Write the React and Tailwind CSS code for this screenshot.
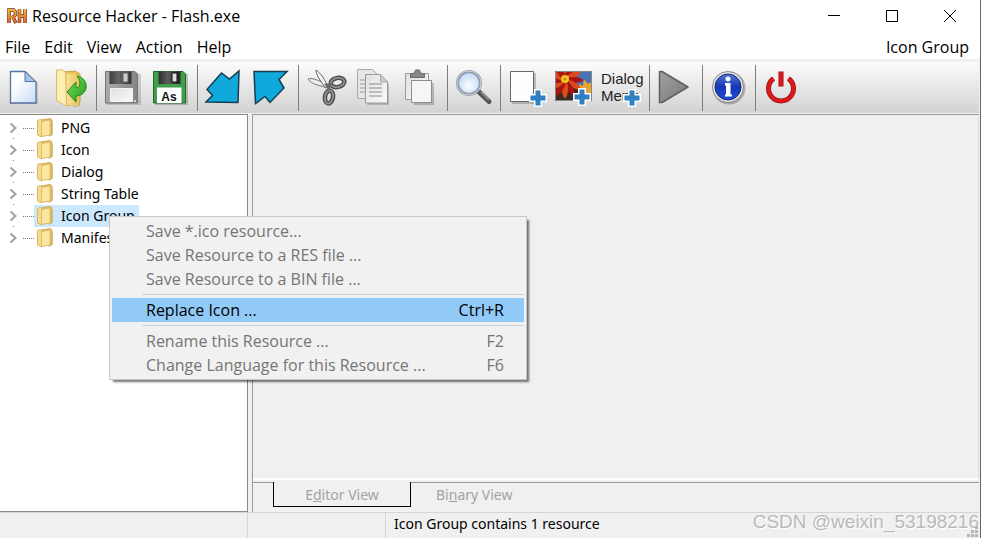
import React, { useState } from "react";

const menus = ["File", "Edit", "View", "Action", "Help"];

const treeItems = ["PNG", "Icon", "Dialog", "String Table", "Icon Group", "Manifest"];

const contextItems = [
  { label: "Save *.ico resource...", disabled: true },
  { label: "Save Resource to a RES file ...", disabled: true },
  { label: "Save Resource to a BIN file ...", disabled: true },
  null,
  { label: "Replace Icon ...", shortcut: "Ctrl+R" },
  null,
  { label: "Rename this Resource ...", shortcut: "F2", disabled: true },
  { label: "Change Language for this Resource ...", shortcut: "F6", disabled: true },
];

function Gradients() {
  return (
    <svg width="0" height="0" className="absolute" aria-hidden="true">
      <defs>
        <linearGradient id="paper" x1="0" y1="0" x2="1" y2="1">
          <stop offset="0.3" stopColor="#ffffff" />
          <stop offset="1" stopColor="#c6daf3" />
        </linearGradient>
        <linearGradient id="grayPaper" x1="0" y1="0" x2="1" y2="1">
          <stop offset="0" stopColor="#e0e0e0" />
          <stop offset="1" stopColor="#fafafa" />
        </linearGradient>
        <linearGradient id="folder" x1="0" y1="0" x2="1" y2="0">
          <stop offset="0" stopColor="#fbe9a6" />
          <stop offset="1" stopColor="#ecc65c" />
        </linearGradient>
        <linearGradient id="grayDisk" x1="0" y1="0" x2="1" y2="0">
          <stop offset="0" stopColor="#a9a9a9" />
          <stop offset="1" stopColor="#858585" />
        </linearGradient>
        <linearGradient id="dark" x1="0" y1="0" x2="1" y2="0">
          <stop offset="0" stopColor="#2c2c2c" />
          <stop offset="0.4" stopColor="#5c5c5c" />
          <stop offset="1" stopColor="#222222" />
        </linearGradient>
        <linearGradient id="greenArrow" x1="0" y1="0" x2="1" y2="1">
          <stop offset="0" stopColor="#7fe05c" />
          <stop offset="1" stopColor="#1f9a1c" />
        </linearGradient>
        <linearGradient id="play" x1="0" y1="0" x2="1" y2="1">
          <stop offset="0" stopColor="#a2a2a2" />
          <stop offset="1" stopColor="#777777" />
        </linearGradient>
        <radialGradient id="lens" cx="0.5" cy="0.6" r="0.6">
          <stop offset="0" stopColor="#ffffff" />
          <stop offset="1" stopColor="#b9d5f7" />
        </radialGradient>
        <linearGradient id="infoBlue" x1="0" y1="0" x2="0" y2="1">
          <stop offset="0" stopColor="#5577dd" />
          <stop offset="0.5" stopColor="#1437b4" />
          <stop offset="1" stopColor="#2450d4" />
        </linearGradient>
        <linearGradient id="rh" x1="0" y1="0" x2="0" y2="1">
          <stop offset="0" stopColor="#f7b640" />
          <stop offset="1" stopColor="#d9622a" />
        </linearGradient>
        <clipPath id="photo">
          <path d="M2 7h37v30H2z" />
        </clipPath>
      </defs>
    </svg>
  );
}

function Plus({ x, y }) {
  return (
    <path
      transform={`translate(${x} ${y})`}
      d="M-2.500-7.500h5v5h5v5h-5v5h-5v-5h-5v-5h5z"
      fill="#2f7fc3"
      stroke="#fff"
      strokeWidth="3"
      paintOrder="stroke"
    />
  );
}

function NewIcon() {
  return (
    <>
      <path d="M11 9h16l11 10v21H11z" fill="#000" opacity="0.12" />
      <path d="M10.500 7.500H25L36 18v21H10.500z" fill="url(#paper)" stroke="#5673a3" strokeWidth="1.300" />
      <path d="M25 7.500V17.500H35.500z" fill="#a9c6ea" stroke="#5673a3" />
    </>
  );
}

function OpenIcon() {
  return (
    <>
      <path d="M9 37l18 6 5-1V12l-5-5-7 1z" fill="#000" opacity="0.2" />
      <path d="M14 8l13-1 5 3v28l-12 4z" fill="#e9c25a" stroke="#c9a04a" />
      <path d="M8.500 6h6l3 2 1 34-10-5.500z" fill="#fdeeb4" stroke="#dcbb6c" />
      <path d="M18.500 9L31 12v31l-12-2z" fill="url(#folder)" opacity="0.8" />
      <path
        d="M29 12c6 1 10 6 9 12-1 5-5 8-10 8v6l-9-10 9-10v6c4 0 6-6 1-12z"
        fill="url(#greenArrow)"
        stroke="#1c8a1a"
      />
    </>
  );
}

function SaveIcon() {
  return (
    <>
      <path d="M6 10h34v31H6z" fill="#000" opacity="0.15" />
      <path d="M4.500 7.500H34l2.500 2.500v29h-32z" fill="url(#grayDisk)" stroke="#747474" />
      <path d="M8.500 7.500h22v12.500h-22z" fill="url(#dark)" opacity="0.85" />
      <path d="M22 9h5v9h-5z" fill="#ccc" stroke="#666" />
      <path d="M9.500 24.500h22v13h-22z" fill="url(#grayPaper)" stroke="#f4f4f4" />
      <circle cx="34" cy="37" r="1" fill="#eee" />
    </>
  );
}

function SaveAsIcon() {
  return (
    <>
      <path d="M6 10h33v31H6z" fill="#000" opacity="0.2" />
      <path d="M4.500 7.500H34L36.500 10v29h-32z" fill="#3fa04b" stroke="#23662c" />
      <path d="M9.500 7.500h22v12.500h-22z" fill="url(#dark)" />
      <path d="M23 9h5v9h-5z" fill="#ddd" stroke="#111" />
      <path d="M8 23.500h24.500v15.500H8z" fill="#fff" />
      <text x="20" y="37" textAnchor="middle" fill="#111" className="font-['Liberation_Sans'] text-[12px] font-bold">
        As
      </text>
    </>
  );
}

function ImportIcon() {
  return (
    <path
      d="M4 38l6.500-6.500L5 25.500 19.500 9l8 6L37 7l-1 31.500z"
      fill="#10a9dc"
      stroke="#173d52"
      strokeWidth="1.500"
    />
  );
}

function ExportIcon() {
  return (
    <path
      d="M4 7.500H37l-8 8 5 8.500-14 14.500-5-6-9.500 7z"
      fill="#10a9dc"
      stroke="#173d52"
      strokeWidth="1.500"
    />
  );
}

function CutIcon() {
  return (
    <>
      <path d="M5 15c4-2 14 3 20 6l-2 2C17 22 8 20 5 15z" fill="#eee" stroke="#777" />
      <path d="M13 6c5 3 9 10 12 17l-3 1C19 18 13 12 13 6z" fill="#f4f4f4" stroke="#666" />
      <ellipse cx="34.500" cy="18.500" rx="7" ry="4.500" transform="rotate(-12 34.500 18.500)" fill="none" stroke="#484848" strokeWidth="4.500" />
      <ellipse cx="34.500" cy="18.500" rx="7" ry="4.500" transform="rotate(-12 34.500 18.500)" fill="none" stroke="#8e8e8e" strokeWidth="2" />
      <ellipse cx="26" cy="33" rx="4" ry="6.500" transform="rotate(10 26 33)" fill="none" stroke="#484848" strokeWidth="4.500" />
      <ellipse cx="26" cy="33" rx="4" ry="6.500" transform="rotate(10 26 33)" fill="none" stroke="#8e8e8e" strokeWidth="2" />
      <path d="M21 20l8-1-3 8z" fill="#6a6a6a" />
    </>
  );
}

function CopyIcon() {
  return (
    <>
      <path d="M6.500 5.500h15l6 6v23h-21z" fill="#e6e6e6" stroke="#a8a8a8" />
      <path d="M9 16h6M9 20h6M9 24h6M9 28h6" stroke="#999" />
      <path d="M16 13h16l6 7v21H16z" fill="#000" opacity="0.18" />
      <path d="M14.500 10.500h15l7 7.500v21h-22z" fill="url(#grayPaper)" stroke="#999" />
      <path d="M29.500 10.500V18h7z" fill="#ccc" stroke="#aaa" />
      <path d="M18 20h13M18 24h13M18 28h13M18 32h13" stroke="#8a8a8a" />
    </>
  );
}

function PasteIcon() {
  return (
    <>
      <path d="M6.500 9.500h23v26h-23z" fill="url(#grayPaper)" stroke="#9a9a9a" />
      <path d="M11.500 13.500V10l4-1 1-3h4l1 3 4 1v3.500z" fill="#888" stroke="#666" />
      <path d="M15 19h20v22H15z" fill="#000" opacity="0.2" />
      <path d="M12.500 16.500h20v22h-20z" fill="#f6f6f6" stroke="#8c8c8c" />
    </>
  );
}

function FindIcon() {
  return (
    <>
      <path d="M26 27l11 10.500" stroke="#555" strokeWidth="5" strokeLinecap="round" />
      <path d="M29 28l8 8" stroke="#999" strokeWidth="1.500" />
      <circle cx="17" cy="19" r="11.500" fill="url(#lens)" stroke="#8d98a8" strokeWidth="3" />
      <circle cx="17" cy="19" r="12" fill="none" stroke="#cfd6df" />
    </>
  );
}

function BlankIcon() {
  return (
    <>
      <path d="M7 9h24v31H7z" fill="#000" opacity="0.2" />
      <path d="M5.500 7.500h23v30h-23z" fill="#fdfdfd" stroke="#666" />
      <Plus x={33} y={34} />
    </>
  );
}

function ImageIcon() {
  const petals = [0, 30, 60, 90, 120, 150, 180, 210, 240, 270, 300, 330];
  return (
    <>
      <g clipPath="url(#photo)">
        <path d="M2 7h37v30H2z" fill="#3f2a22" />
        <path d="M20 7h19v15H20z" fill="#4a73b5" />
        <path d="M26 20l4 2 1-7 4 5 5-3v14H26z" fill="#e9a62c" />
        {petals.map((angle) => (
          <ellipse
            key={angle}
            cx="12"
            cy="7"
            rx="3"
            ry="9"
            transform={`rotate(${angle} 12 16)`}
            fill={angle % 60 === 0 ? "#de4a1c" : "#a81510"}
          />
        ))}
        <circle cx="12" cy="15" r="4" fill="#f3c423" />
        <circle cx="12" cy="15" r="1.500" fill="#c98a12" />
      </g>
      <path d="M2.500 7.500h36v29h-36z" fill="none" stroke="#888" />
      <Plus x={29} y={33} />
    </>
  );
}

function DialogIcon() {
  return (
    <>
      <text x="0" y="20" fill="#222" className="font-['Liberation_Sans'] text-[15px]">
        Dialog
      </text>
      <text x="0" y="37" fill="#222" className="font-['Liberation_Sans'] text-[15px]">
        Menu
      </text>
      <Plus x={31} y={34} />
    </>
  );
}

function RunIcon() {
  return (
    <path
      d="M5.500 7.500H8L34 23 8 38.500H5.500z"
      fill="url(#play)"
      stroke="#5f5f5f"
      strokeWidth="1.500"
      strokeLinejoin="round"
    />
  );
}

function InfoIcon() {
  return (
    <>
      <circle cx="22" cy="24" r="16.500" fill="#000" opacity="0.25" />
      <circle cx="21" cy="23" r="15.500" fill="#e6e6e6" stroke="#8b8b8b" />
      <circle cx="21" cy="23" r="13" fill="url(#infoBlue)" stroke="#14277a" />
      <circle cx="21" cy="15" r="2.500" fill="#fff" />
      <path d="M18 19h5.500v11.500H25v2h-7v-2h1v-9h-1z" fill="#fff" />
    </>
  );
}

function PowerIcon() {
  return (
    <>
      <path d="M13.500 14.500a12.500 12.500 0 1 0 15 0" fill="none" stroke="#8f1515" strokeWidth="5" />
      <path d="M13.500 14.500a12.500 12.500 0 1 0 15 0" fill="none" stroke="#e01818" strokeWidth="3.500" />
      <path d="M21 7.500v15" stroke="#8f1515" strokeWidth="5" />
      <path d="M21 8v14" stroke="#e01818" strokeWidth="3.500" />
    </>
  );
}

const toolGroups = [
  [["New", NewIcon], ["Open", OpenIcon]],
  [["Save", SaveIcon], ["Save as", SaveAsIcon]],
  [["Import", ImportIcon], ["Export", ExportIcon]],
  [["Cut", CutIcon], ["Copy", CopyIcon], ["Paste", PasteIcon]],
  [["Find", FindIcon]],
  [["Add blank script", BlankIcon], ["Add image", ImageIcon], ["Add dialog or menu", DialogIcon]],
  [["Compile script", RunIcon]],
  [["About", InfoIcon]],
  [["Exit", PowerIcon]],
];

function TitleBar() {
  return (
    <header className="flex h-8 items-center bg-white">
      <svg width="22" height="20" viewBox="0 0 22 20" className="ml-1.5 shrink-0">
        <path
          d="M3 17V4h4.500l2 2v3L7 11l3 6M13.500 3v14M19 3v14M13 10h6"
          fill="none"
          stroke="#6b2d12"
          strokeWidth="3.500"
        />
        <path
          d="M3 17V4h4.500l2 2v3L7 11H4M7 11l3 6M13.500 3v14M19 3v14M13 10h6"
          fill="none"
          stroke="url(#rh)"
          strokeWidth="2.200"
        />
      </svg>
      <h1 className="ml-1 flex-1 text-base">Resource Hacker - Flash.exe</h1>
      <div className="mr-px flex">
        <button aria-label="Minimize" className="flex h-8 w-[58px] items-center justify-center">
          <svg width="12" height="12" viewBox="0 0 12 12"><path d="M0 5.500h12" stroke="#000" /></svg>
        </button>
        <button aria-label="Maximize" className="flex h-8 w-[58px] items-center justify-center">
          <svg width="12" height="12" viewBox="0 0 12 12"><path d="M.5.5h11v11H.5z" fill="none" stroke="#000" /></svg>
        </button>
        <button aria-label="Close" className="flex h-8 w-[58px] items-center justify-center">
          <svg width="12" height="12" viewBox="0 0 12 12"><path d="M0 0l12 12M12 0L0 12" stroke="#000" /></svg>
        </button>
      </div>
    </header>
  );
}

function Toolbar() {
  return (
    <div role="toolbar" className="flex h-[51px] items-center bg-linear-to-b from-[#fcfcfc] to-[#d2d2d2]">
      {toolGroups.map((group, i) => (
        <React.Fragment key={i}>
          {i > 0 && <div className="mr-1 h-[46px] w-px bg-[#7c7c7c]" />}
          {group.map(([label, Icon]) => (
            <button key={label} aria-label={label} title={label}>
              <svg width="48" height="48" viewBox="0 0 48 48" className="block">
                <Icon />
              </svg>
            </button>
          ))}
        </React.Fragment>
      ))}
    </div>
  );
}

function TreeItem({ label, selected, last, onSelect }) {
  return (
    <li className="flex h-[22px] items-center">
      <svg width="23" height="22" viewBox="0 0 23 22" className="shrink-0">
        <path d="M10.500 6.500l5 4.500-5 4.500" fill="none" stroke="#a0a0a0" strokeWidth="2" />
        {!last && <path d="M13 21h1v1h-1z" fill="#777" />}
      </svg>
      <div className="w-[11px] border-t border-dotted border-[#777]" />
      <button
        onClick={onSelect}
        className={`flex h-[22px] items-center pl-0.5 pr-1 ${selected ? "bg-[#cce8ff]" : ""}`}
      >
        <svg width="18" height="20" viewBox="0 0 18 20" className="mr-[7px]">
          <path d="M9 2l8 3v12l-4 2z" fill="#b9b39c" opacity="0.6" />
          <path d="M5 2l9-1.500 2 1.500v14l-3 2z" fill="#e2bf60" stroke="#cfac55" />
          <path d="M1.500 2.500l3-1L6 3v16l-4.500-2z" fill="#f6dd8c" stroke="#d8b865" />
          <path d="M5.500 3.500L14 2v15l-8.500 1.500z" fill="#fbe7a2" stroke="#dcbc68" />
        </svg>
        {label}
      </button>
    </li>
  );
}

function ContextMenu() {
  return (
    <div
      role="menu"
      className="absolute left-[109px] top-[216px] w-[418px] border border-[#c8c8c8] bg-[#f1f1f1] p-0.5 text-base shadow-[3px_3px_2px_-1px_rgba(0,0,0,0.55)]"
    >
      {contextItems.map((item, i) =>
        item === null ? (
          <div key={i} role="separator" className="my-[3px] ml-[30px] h-px bg-[#cfcfcf]" />
        ) : (
          <button
            key={item.label}
            role="menuitem"
            disabled={item.disabled}
            className={`flex h-6 w-full items-center justify-between pl-[34px] pr-5 ${
              item.disabled ? "text-[#757575]" : "bg-[#91c9f7] text-black"
            }`}
          >
            <span>{item.label}</span>
            <span>{item.shortcut}</span>
          </button>
        )
      )}
    </div>
  );
}

export default function App() {
  const [selected, setSelected] = useState("Icon Group");

  return (
    <div className="relative flex min-h-screen flex-col border-r border-[#666] bg-[#f0f0f0] font-['Open_Sans',sans-serif] text-black">
      <Gradients />
      <TitleBar />
      <nav className="flex h-[27px] items-center bg-white pt-0.5 text-base">
        {menus.map((menu) => (
          <button key={menu} className="px-[7px] first:pl-[5px]">
            {menu}
          </button>
        ))}
        <span className="ml-auto pr-[11px]">Icon Group</span>
      </nav>
      <div className="mt-[3px] flex flex-1 flex-col pr-px">
        <Toolbar />

        <main className="mt-px flex flex-1 gap-1 font-['Noto_Sans',sans-serif] text-sm">
          <aside className="w-[248px] shrink-0 border-b border-r border-t border-[#888] bg-white pt-0.5">
            <ul>
              {treeItems.map((item, i) => (
                <TreeItem
                  key={item}
                  label={item}
                  selected={item === selected}
                  last={i === treeItems.length - 1}
                  onSelect={() => setSelected(item)}
                />
              ))}
            </ul>
          </aside>
          <section className="flex flex-1 flex-col border-l border-t border-[#999]">
            <div className="flex-1 border-b-2 border-r border-b-white border-r-[#ddd]" />
            <div role="tablist" className="mt-0.5 flex h-[30px] text-[#a3a3a3] [text-shadow:1px_1px_0_#fff]">
              <div className="w-5 border-t border-[#999]" />
              <button role="tab" aria-selected="true" className="h-[25px] w-[138px] border-x border-b border-black pt-px">
                E<u>d</u>itor View
              </button>
              <div className="flex-1 border-t border-[#999]">
                <button role="tab" aria-selected="false" className="h-6 px-[25px]">
                  Bi<u>n</u>ary View
                </button>
              </div>
            </div>
          </section>
        </main>

        <footer className="relative flex h-[26px] items-stretch border-t border-[#d5d5d5] font-['Noto_Sans',sans-serif] text-sm">
          <div className="w-[248px] border-r border-[#d5d5d5]" />
          <div className="w-[138px] border-r border-[#d5d5d5]" />
          <p className="flex-1 pl-2 pt-px">Icon Group contains 1 resource</p>
          <p className="font-['Liberation_Sans',sans-serif] text-[19px] leading-[18px] text-[#b9b9b9] [text-shadow:1px_1px_0_#fff]">
            CSDN @weixin_53198216
          </p>
          <svg width="12" height="12" viewBox="0 0 12 12" className="absolute bottom-0 right-0">
            <path
              d="M8 0h3v3H8zM4 4h3v3H4zM8 4h3v3H8zM0 8h3v3H0zM4 8h3v3H4zM8 8h3v3H8z"
              fill="#b5b5b5"
            />
          </svg>
        </footer>
      </div>
      <ContextMenu />
    </div>
  );
}
